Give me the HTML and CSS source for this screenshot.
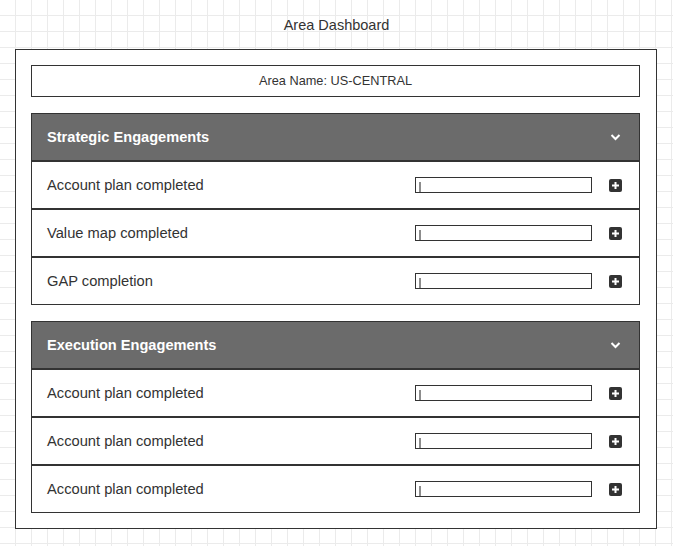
FILE: index.html
```html
<!DOCTYPE html>
<html lang="en">
<head>
<meta charset="utf-8">
<title>Area Dashboard</title>
<link rel="stylesheet" href="styles.css">
</head>
<body>
  <div class="title">Area Dashboard</div>
  <div class="frame">
    <div class="area-name">Area Name: US-CENTRAL</div>

    <section class="panel">
      <div class="panel-head">
        <span class="head-text">Strategic Engagements</span>
        <svg class="chevron" width="13" height="13" viewBox="0 0 13 13"><polyline points="2.5,4 6.5,8 10.5,4" fill="none" stroke="#fff" stroke-width="2"/></svg>
      </div>
      <div class="row">
        <span class="label">Account plan completed</span>
        <div class="field"><span class="caret"></span></div>
        <svg class="plus" width="13" height="13" viewBox="0 0 13 13"><rect width="13" height="13" rx="2" fill="#333"/><path d="M6.5 3v7M3 6.5h7" stroke="#fff" stroke-width="2"/></svg>
      </div>
      <div class="row">
        <span class="label">Value map completed</span>
        <div class="field"><span class="caret"></span></div>
        <svg class="plus" width="13" height="13" viewBox="0 0 13 13"><rect width="13" height="13" rx="2" fill="#333"/><path d="M6.5 3v7M3 6.5h7" stroke="#fff" stroke-width="2"/></svg>
      </div>
      <div class="row">
        <span class="label">GAP completion</span>
        <div class="field"><span class="caret"></span></div>
        <svg class="plus" width="13" height="13" viewBox="0 0 13 13"><rect width="13" height="13" rx="2" fill="#333"/><path d="M6.5 3v7M3 6.5h7" stroke="#fff" stroke-width="2"/></svg>
      </div>
    </section>

    <section class="panel">
      <div class="panel-head">
        <span class="head-text">Execution Engagements</span>
        <svg class="chevron" width="13" height="13" viewBox="0 0 13 13"><polyline points="2.5,4 6.5,8 10.5,4" fill="none" stroke="#fff" stroke-width="2"/></svg>
      </div>
      <div class="row">
        <span class="label">Account plan completed</span>
        <div class="field"><span class="caret"></span></div>
        <svg class="plus" width="13" height="13" viewBox="0 0 13 13"><rect width="13" height="13" rx="2" fill="#333"/><path d="M6.5 3v7M3 6.5h7" stroke="#fff" stroke-width="2"/></svg>
      </div>
      <div class="row">
        <span class="label">Account plan completed</span>
        <div class="field"><span class="caret"></span></div>
        <svg class="plus" width="13" height="13" viewBox="0 0 13 13"><rect width="13" height="13" rx="2" fill="#333"/><path d="M6.5 3v7M3 6.5h7" stroke="#fff" stroke-width="2"/></svg>
      </div>
      <div class="row">
        <span class="label">Account plan completed</span>
        <div class="field"><span class="caret"></span></div>
        <svg class="plus" width="13" height="13" viewBox="0 0 13 13"><rect width="13" height="13" rx="2" fill="#333"/><path d="M6.5 3v7M3 6.5h7" stroke="#fff" stroke-width="2"/></svg>
      </div>
    </section>
  </div>
</body>
</html>
```
FILE: styles.css
```css
html, body {
  margin: 0;
  padding: 0;
}
body {
  width: 673px;
  height: 546px;
  overflow: hidden;
  font-family: "Liberation Sans", Arial, sans-serif;
  color: #333333;
  background-color: #ffffff;
  background-image:
    linear-gradient(to right, transparent 15px, #ebebeb 15px),
    linear-gradient(to bottom, transparent 15px, #ebebeb 15px);
  background-size: 16px 16px;
}
.title {
  box-sizing: border-box;
  height: 49px;
  padding-top: 16px;
  line-height: 18px;
  font-size: 14.5px;
  text-align: center;
}
.frame {
  box-sizing: border-box;
  margin-left: 15px;
  width: 642px;
  height: 480px;
  border: 1px solid #333333;
  background: #ffffff;
  padding: 15px 16px 15px 15px;
  display: flex;
  flex-direction: column;
  gap: 16px;
}
.area-name {
  box-sizing: border-box;
  height: 32px;
  border: 1px solid #333333;
  line-height: 30px;
  font-size: 12.75px;
  text-align: center;
}
.panel {
  box-sizing: border-box;
  height: 192px;
  border: 1px solid #333333;
  display: flex;
  flex-direction: column;
}
.panel-head {
  height: 46px;
  flex: none;
  background: #6b6b6b;
  border-bottom: 2px solid #333333;
  display: flex;
  align-items: center;
  padding: 0 17px 0 15px;
  color: #ffffff;
  font-weight: bold;
  font-size: 14.6px;
}
.head-text {
  flex: 1;
}
.chevron {
  display: block;
}
.row {
  height: 46px;
  flex: none;
  display: flex;
  align-items: center;
  padding: 0 17px 0 15px;
  font-size: 14.7px;
  border-bottom: 2px solid #333333;
}
.row:last-child {
  border-bottom: none;
}
.label {
  flex: 1;
}
.field {
  box-sizing: border-box;
  width: 177px;
  height: 16px;
  border: 1px solid #333333;
  margin-right: 17px;
  display: flex;
  align-items: flex-end;
  padding-left: 3px;
}
.caret {
  width: 2px;
  height: 10px;
  background: #8c8c8c;
}
.plus {
  display: block;
}
```
